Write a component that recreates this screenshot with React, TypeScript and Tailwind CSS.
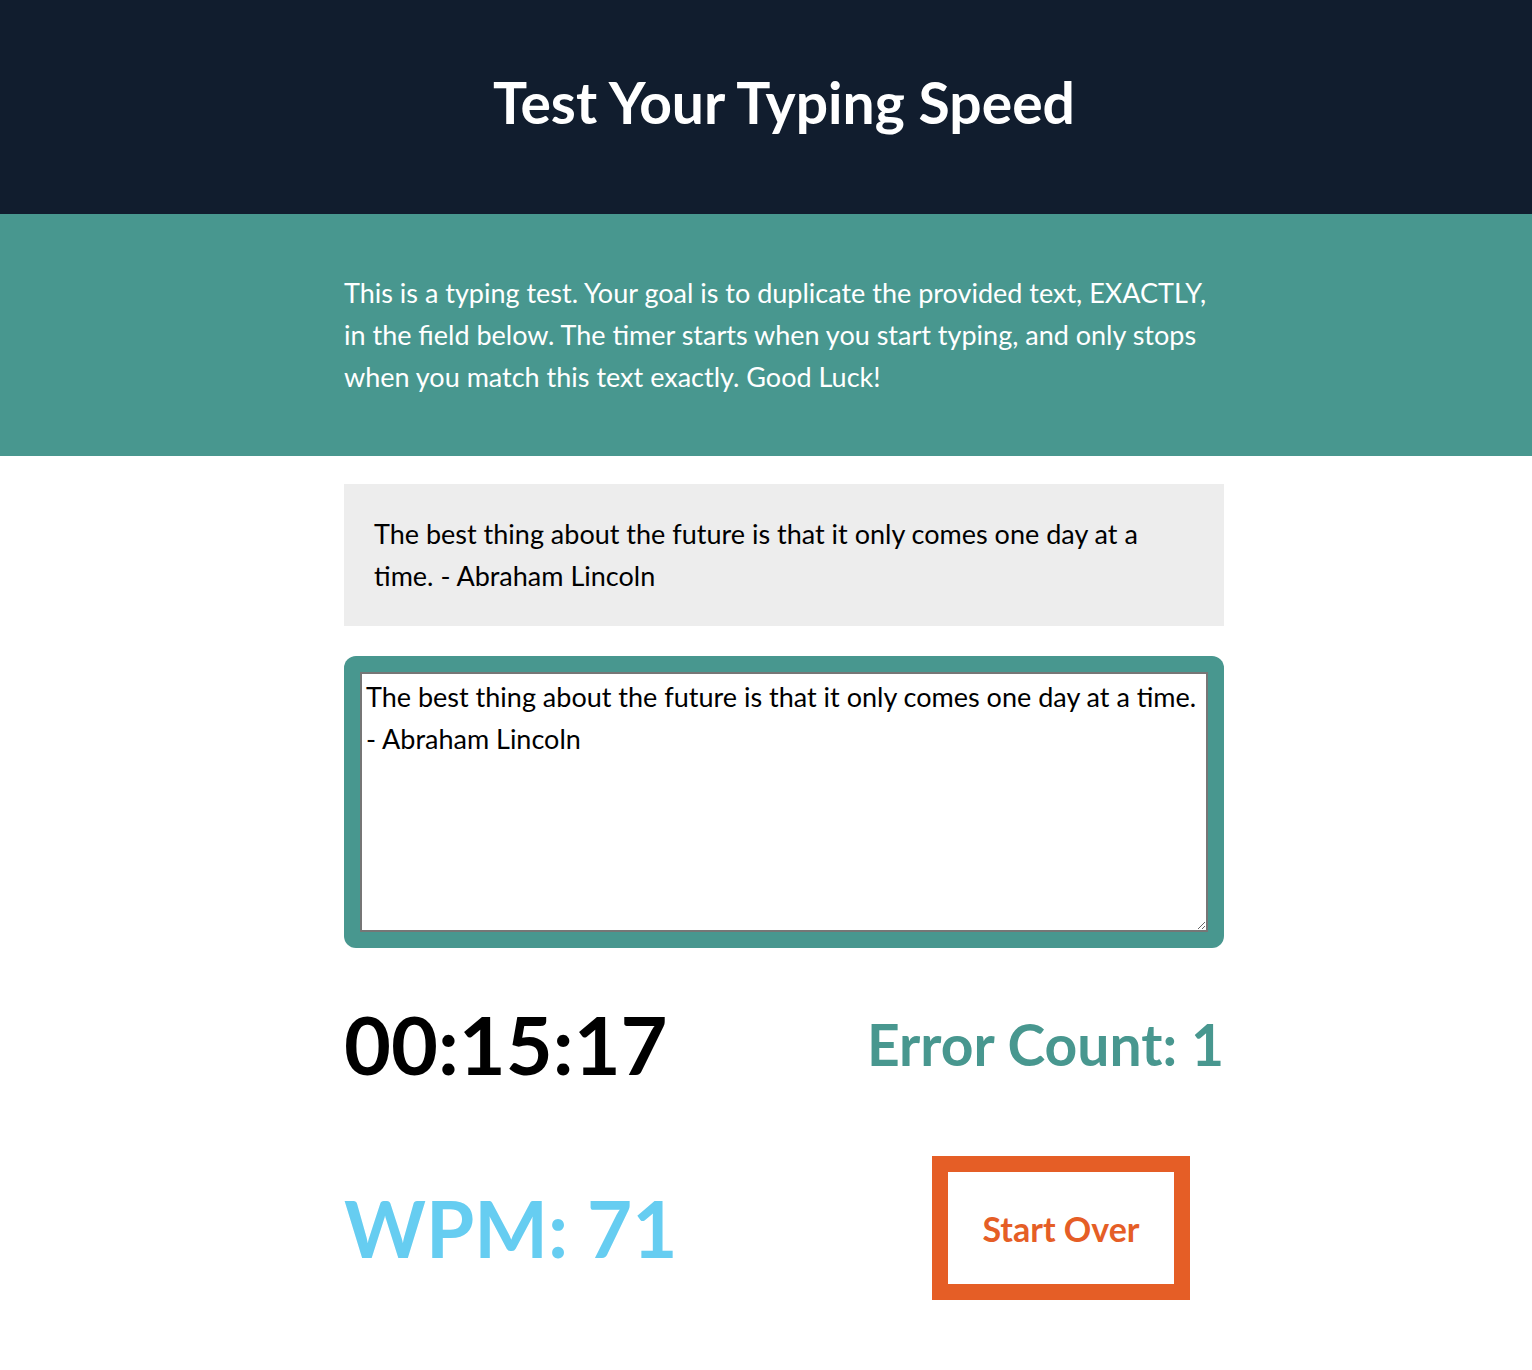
import { useState } from 'react';

const quote = 'The best thing about the future is that it only comes one day at a time. - Abraham Lincoln';

export default function App() {
  const [typed, setTyped] = useState(quote);

  return (
    <div className="min-h-[1370px] bg-white font-['Lato','Open_Sans',sans-serif]">
      <header className="flex h-[214px] items-center justify-center bg-[#111d2e] pb-[8px] pl-[36px]">
        <h1 className="text-[57px] font-bold text-white">Test Your Typing Speed</h1>
      </header>

      <section className="bg-[#48978f] py-[58px] pl-[36px]">
        <p className="mx-auto w-[880px] whitespace-nowrap text-[27px] leading-[42px] text-white">
          This is a typing test. Your goal is to duplicate the provided text, EXACTLY,
          <br />
          in the field below. The timer starts when you start typing, and only stops
          <br />
          when you match this text exactly. Good Luck!
        </p>
      </section>

      <div className="pl-[36px]">
        <main className="mx-auto flex w-[880px] flex-col pt-[28px]">
          <div className="bg-[#ededed] px-[30px] py-[29px] text-[27px] leading-[42px] text-black">
            <p className="w-[780px]">{quote}</p>
          </div>

          <div className="mt-[30px] rounded-[12px] bg-[#48978f] p-[16px]">
            <textarea
              className="block h-[260px] w-full resize-y border-2 border-[#767676] bg-white px-[4px] py-[2px] text-[27px] leading-[42px] text-black outline-none"
              value={typed}
              onChange={(e) => setTyped(e.target.value)}
            />
          </div>

          <div className="mt-[55px] flex items-end justify-between">
            <div className="text-[81px] font-bold leading-none text-black">00:15:17</div>
            <div className="mb-[11px] text-[57px] font-bold leading-none text-[#48978f]">Error Count: 1</div>
          </div>

          <div className="mt-[72px] flex items-center justify-between">
            <div className="text-[78px] font-bold leading-none text-[#66cdf1]">WPM: 71</div>
            <button className="mr-[34px] flex h-[144px] w-[258px] items-center justify-center border-[16px] border-[#e55e26] bg-white text-[34px] font-bold text-[#e55e26]">
              Start Over
            </button>
          </div>
        </main>
      </div>
    </div>
  );
}
